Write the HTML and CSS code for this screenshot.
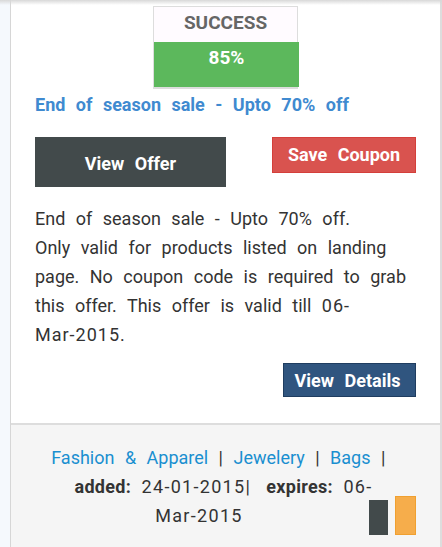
FILE: index.html
```html
<!DOCTYPE html>
<html lang="en">
<head>
  <meta charset="UTF-8">
  <meta name="viewport" content="width=device-width, initial-scale=1.0">
  <title>Coupon</title>
  <link rel="stylesheet" href="styles.css">
</head>
<body>
  <div class="top-shade"></div>
  <div class="coupon-card">
    <div class="coupon-body">
      <div class="success-box">
        <div class="success-label">SUCCESS</div>
        <div class="success-rate">85%</div>
      </div>

      <h2 class="offer-title">End of season sale - Upto 70% off</h2>

      <div class="button-row">
        <button class="btn btn-offer">View Offer</button>
        <button class="btn btn-save">Save Coupon</button>
      </div>

      <p class="offer-text">End of season sale - Upto 70% off.<br>Only valid for products listed on landing page. No coupon code is required to grab this offer. This offer is valid till <span class="date">06-<span class="nowrap">Mar-2015</span></span>.</p>

      <div class="details-row">
        <button class="btn btn-details">View Details</button>
      </div>
    </div>

    <div class="coupon-footer">
      <span class="float-spacer"></span>
      <div class="vote-bars">
        <span class="bar bar-dark"></span>
        <span class="bar bar-orange"></span>
      </div>
      <a href="#">Fashion &amp; Apparel</a> | <a href="#">Jewelery</a> | <a href="#">Bags</a> |&nbsp;
      <b>added:</b> <span class="date">24-01-2015</span>| <b class="expires">expires:</b> <span class="date">06-<span class="nowrap">Mar-2015</span></span>
    </div>
  </div>
</body>
</html>
```

FILE: styles.css
```css
body {
  margin: 0;
  padding-left: 10px;
  background-color: #f5f9fd;
  font-family: Roboto, "Noto Sans", sans-serif;
  color: #333;
}

.top-shade {
  position: absolute;
  top: 0;
  left: 0;
  right: 0;
  height: 5px;
  background: linear-gradient(#d8d8d8, rgba(255, 255, 255, 0));
}

.coupon-card {
  background-color: #fff;
  border-left: 1px solid #d6d6d6;
  border-right: 2px solid #ddd;
}

.coupon-body {
  padding: 6px 24px 26px 24px;
}

.nowrap {
  white-space: nowrap;
}

.date {
  letter-spacing: 1px;
}

/* Success meter */
.success-box {
  width: 143px;
  margin: 0 auto;
  border: 1px solid #ddd;
  border-bottom: 2px solid #ddd;
  background-color: #fffbff;
}

.success-label {
  height: 35px;
  line-height: 32px;
  text-align: center;
  font-weight: bold;
  font-size: 19px;
  color: #666;
}

.success-rate {
  height: 45px;
  line-height: 32px;
  margin-right: -2px;
  text-align: center;
  font-weight: bold;
  font-size: 19px;
  color: #fff;
  background-color: #5cb85c;
}

.offer-title {
  margin: 4px 0 0 0;
  font-size: 18px;
  line-height: 24px;
  color: #3f8ad0;
  word-spacing: 6px;
}

/* Buttons */
.btn {
  font-family: Roboto, "Noto Sans", sans-serif;
  font-weight: bold;
  font-size: 18px;
  color: #fff;
  border: none;
  padding: 0;
  word-spacing: 6px;
  cursor: pointer;
}

.button-row {
  display: flex;
  justify-content: space-between;
  align-items: flex-start;
  margin-top: 20px;
}

.btn-offer {
  width: 191px;
  height: 50px;
  padding-top: 2px;
  background-color: #424a4b;
}

.btn-save {
  width: 144px;
  height: 36px;
  background-color: #d9534f;
  border: 1px solid #d43f3a;
  padding-bottom: 2px;
}

.offer-text {
  margin: 17px 0 0 0;
  font-size: 18px;
  line-height: 29px;
  word-spacing: 6px;
}

.details-row {
  display: flex;
  justify-content: flex-end;
  margin-top: 14px;
}

.btn-details {
  width: 133px;
  height: 34px;
  padding-right: 4px;
  background-color: #30557f;
  border: 1px solid #1f3d60;
}

/* Footer */
.coupon-footer {
  border-top: 2px solid #ddd;
  background-color: #f5f5f5;
  padding: 18px 28px 30px 24px;
  text-align: center;
  font-size: 18px;
  line-height: 29px;
  word-spacing: 6px;
}

.coupon-footer a {
  color: #1a8fd0;
  text-decoration: none;
}

.coupon-footer b {
  letter-spacing: 0.3px;
}

.coupon-footer .date {
  letter-spacing: 1.3px;
}

.coupon-footer .expires {
  margin-left: 6px;
}

/* keeps the bars below the first two lines */
.float-spacer {
  float: right;
  width: 0;
  height: 58px;
}

.vote-bars {
  float: right;
  clear: right;
  display: flex;
  align-items: flex-end;
  gap: 7px;
  height: 37px;
  margin: -3px -4px 0 6px;
}

.bar {
  display: block;
  width: 19px;
}

.bar-dark {
  height: 35px;
  background-color: #424a4b;
}

.bar-orange {
  height: 37px;
  background-color: #f6ad4b;
  border: 1px solid #f0a030;
}
```
